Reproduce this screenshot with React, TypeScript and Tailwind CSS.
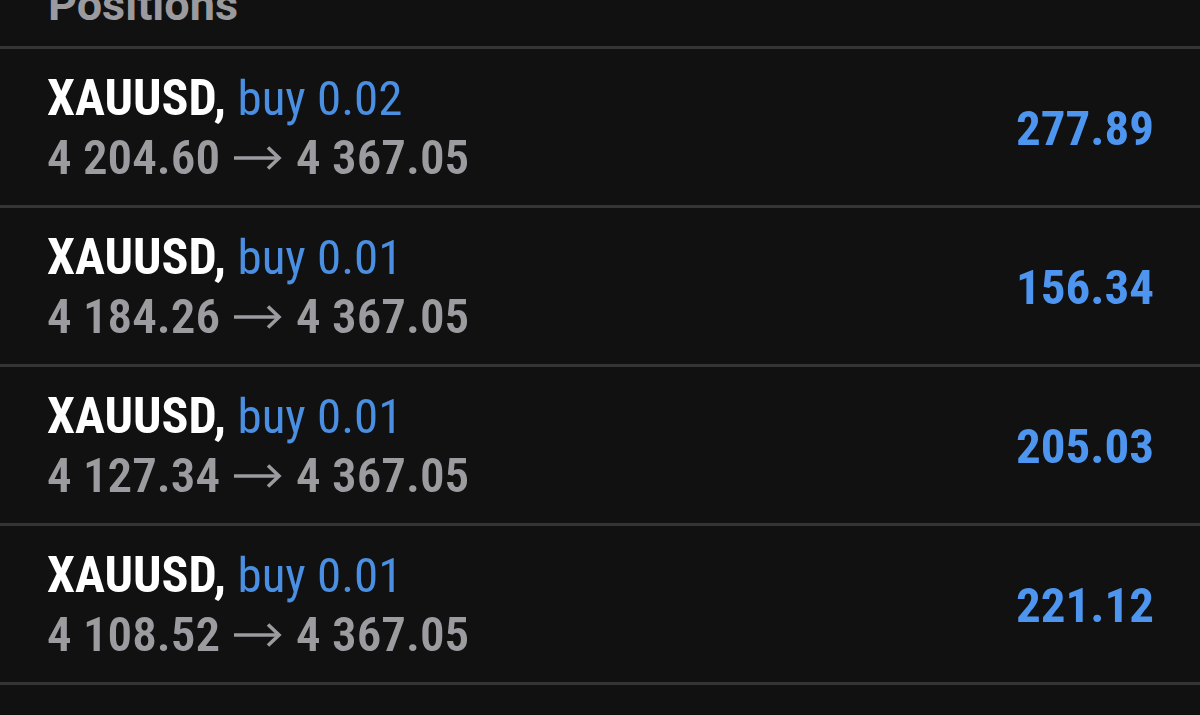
const positions = [
  { symbol: 'XAUUSD', side: 'buy', volume: '0.02', open: '4 204.60', current: '4 367.05', profit: '277.89' },
  { symbol: 'XAUUSD', side: 'buy', volume: '0.01', open: '4 184.26', current: '4 367.05', profit: '156.34' },
  { symbol: 'XAUUSD', side: 'buy', volume: '0.01', open: '4 127.34', current: '4 367.05', profit: '205.03' },
  { symbol: 'XAUUSD', side: 'buy', volume: '0.01', open: '4 108.52', current: '4 367.05', profit: '221.12' },
]

// long thin arrow, Roboto's → is drawn like this on Android
function Arrow() {
  return (
    <svg width="50" height="26" viewBox="0 0 50 26" className="ml-[13px] mr-[13px] inline-block align-middle" fill="none" stroke="#9b9ba0" strokeWidth="3.6">
      <path d="M1 13h45" />
      <path d="M35 2.5l11 10.5-11 10.5" />
    </svg>
  )
}

function PositionRow({ p }: { p: (typeof positions)[number] }) {
  return (
    <div className="flex h-[159px] items-center justify-between border-b-[3px] border-[#353535] pl-[47px] pr-[46px] pt-[2px]">
      <div className="flex flex-col">
        <div className="text-[50px] leading-[59px] whitespace-nowrap">
          <span className="font-bold text-white">{p.symbol},</span>{' '}
          <span className="text-[49px] font-normal text-[#4a8fe2]">{p.side} {p.volume}</span>
        </div>
        <div className="flex items-center text-[49px] leading-[59px] font-semibold text-[#9b9ba0] whitespace-nowrap">
          <span>{p.open}</span>
          <Arrow />
          <span>{p.current}</span>
        </div>
      </div>
      <div className="text-[49px] leading-none font-bold text-[#4d95ee]">{p.profit}</div>
    </div>
  )
}

export default function App() {
  return (
    <div className="h-[715px] w-full overflow-hidden bg-[#111111] font-['Roboto_Condensed','Roboto',sans-serif] font-stretch-condensed">
      <div className="flex h-[49px] items-end border-b-[3px] border-[#353535] pb-[19px] pl-[48px]">
        <div className="font-['Roboto',sans-serif] text-[45px] leading-none font-bold text-[#9a9a9f] font-stretch-normal">Positions</div>
      </div>
      {positions.map((p, i) => (
        <PositionRow key={i} p={p} />
      ))}
    </div>
  )
}
